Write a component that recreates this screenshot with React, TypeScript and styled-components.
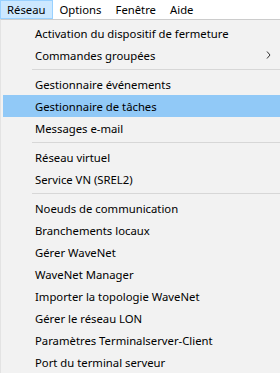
import React, { FC } from "react";
import styled, { createGlobalStyle } from "styled-components";

const GlobalStyle = createGlobalStyle`
  html, body {
    margin: 0;
    padding: 0;
    background: #ffffff;
  }
  body {
    font-family: "Noto Sans", "Open Sans", sans-serif;
    font-size: 11.3px;
    color: #000000;
  }
`;

const Page = styled.div`
  width: 280px;
  height: 373px;
  overflow: hidden;
  display: flex;
  flex-direction: column;
`;

const MenuBar = styled.div`
  display: flex;
  height: 19px;
  background: #ffffff;
`;

const MenuBarItem = styled.div<{ $active?: boolean }>`
  display: flex;
  align-items: center;
  padding: 0 6px;
  border: 1px solid ${(p) => (p.$active ? "#99d1ff" : "transparent")};
  background: ${(p) => (p.$active ? "#cce8ff" : "transparent")};
  line-height: 1;
  white-space: nowrap;
`;

const Dropdown = styled.div`
  flex: 1;
  width: 300px;
  background: #f2f2f2;
  border-top: 1px solid #cccccc;
  border-left: 1px solid #e3e3e3;
  padding: 2px 0 0 2px;
`;

const Item = styled.div<{ $hover?: boolean }>`
  display: flex;
  align-items: center;
  height: 22px;
  padding-left: 32px;
  background: ${(p) => (p.$hover ? "#91c9f7" : "transparent")};
  white-space: nowrap;
  position: relative;
`;

const Label = styled.span`
  flex: 1;
`;

const Arrow = styled.svg`
  position: absolute;
  left: 263px;
  top: 7px;
`;

const Separator = styled.div`
  height: 7px;
  display: flex;
  align-items: center;
  padding-left: 29px;

  &::after {
    content: "";
    flex: 1;
    height: 1px;
    background: #d7d7d7;
  }
`;

type Entry = { label?: string; sub?: boolean; hover?: boolean };

const entries: Entry[] = [
  { label: "Activation du dispositif de fermeture" },
  { label: "Commandes groupées", sub: true },
  {},
  { label: "Gestionnaire événements" },
  { label: "Gestionnaire de tâches", hover: true },
  { label: "Messages e-mail" },
  {},
  { label: "Réseau virtuel" },
  { label: "Service VN (SREL2)" },
  {},
  { label: "Noeuds de communication" },
  { label: "Branchements locaux" },
  { label: "Gérer WaveNet" },
  { label: "WaveNet Manager" },
  { label: "Importer la topologie WaveNet" },
  { label: "Gérer le réseau LON" },
  { label: "Paramètres Terminalserver-Client" },
  { label: "Port du terminal serveur" },
];

const App: FC = () => (
  <Page>
    <GlobalStyle />
    <MenuBar>
      <MenuBarItem $active>Réseau</MenuBarItem>
      <MenuBarItem>Options</MenuBarItem>
      <MenuBarItem>Fenêtre</MenuBarItem>
      <MenuBarItem>Aide</MenuBarItem>
    </MenuBar>
    <Dropdown>
      {entries.map((e, i) =>
        e.label ? (
          <Item key={i} $hover={e.hover}>
            <Label>{e.label}</Label>
            {e.sub && (
              <Arrow width="5" height="8" viewBox="0 0 5 8">
                <path d="M1 0.5 L4 4 L1 7.5" fill="none" stroke="#333" strokeWidth="1" />
              </Arrow>
            )}
          </Item>
        ) : (
          <Separator key={i} />
        )
      )}
    </Dropdown>
  </Page>
);

export default App;
